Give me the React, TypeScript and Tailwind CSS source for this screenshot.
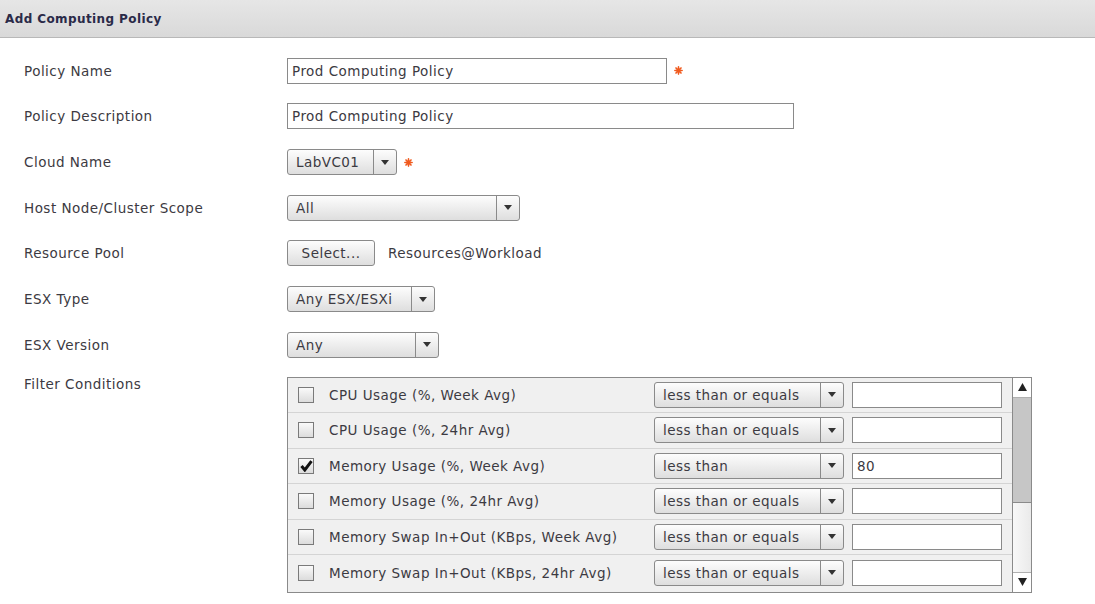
import React from "react";

const font = { fontFamily: '"DejaVu Sans", Verdana, sans-serif' };

function Caret() {
  return (
    <svg width="8" height="5" viewBox="0 0 8 5">
      <path d="M0 0h8L4 5z" fill="#333" />
    </svg>
  );
}

function Select({ value, width, arrowW = 23 }: { value: string; width: string; arrowW?: number }) {
  return (
    <div
      className={`flex h-[26px] ${width} items-stretch rounded-[3px] border border-[#8a8a8a] bg-gradient-to-b from-[#fdfdfd] to-[#dedede] text-[13.5px] tracking-[0.45px] text-[#3c3a42]`}
    >
      <div className="flex flex-1 items-center pl-2 whitespace-nowrap">{value}</div>
      <div className="flex items-center justify-center border-l border-[#8a8a8a]" style={{ width: arrowW }}>
        <Caret />
      </div>
    </div>
  );
}

function Star() {
  return (
    <svg className="ml-[7px]" width="9" height="9" viewBox="0 0 10 10">
      <g stroke="#f05a1e" strokeWidth="1.8" strokeLinecap="round">
        <path d="M5 1v8M1 5h8M2.2 2.2l5.6 5.6M7.8 2.2l-5.6 5.6" />
      </g>
    </svg>
  );
}

function Checkbox({ checked }: { checked?: boolean }) {
  return (
    <div className="flex h-[16px] w-[16px] items-center justify-center border border-[#7a7a7a] bg-gradient-to-b from-[#fafafa] to-[#dcdcdc]">
      {checked && (
        <svg width="13" height="12" viewBox="0 0 13 12">
          <path d="M1.5 6 L4.8 10 L11.5 1.2" stroke="#111" strokeWidth="3" fill="none" />
        </svg>
      )}
    </div>
  );
}

const conditions = [
  { name: "CPU Usage (%, Week Avg)", op: "less than or equals", val: "" },
  { name: "CPU Usage (%, 24hr Avg)", op: "less than or equals", val: "" },
  { name: "Memory Usage (%, Week Avg)", op: "less than", val: "80", checked: true },
  { name: "Memory Usage (%, 24hr Avg)", op: "less than or equals", val: "" },
  { name: "Memory Swap In+Out (KBps, Week Avg)", op: "less than or equals", val: "" },
  { name: "Memory Swap In+Out (KBps, 24hr Avg)", op: "less than or equals", val: "" },
];

const text = "text-[13.5px] tracking-[0.48px] text-[#3c3a42]";

function Row({ label, children }: { label: string; children: React.ReactNode }) {
  return (
    <div className="flex h-[45.67px] items-center">
      <div className={`w-[263px] ${text}`}>{label}</div>
      <div className="flex items-center">{children}</div>
    </div>
  );
}

export default function App() {
  return (
    <div className="h-[604px] w-[1095px] overflow-hidden bg-white" style={font}>
      {/* Header */}
      <div className="flex h-[38px] items-center border-b border-[#b8b8b8] bg-gradient-to-b from-[#e6e6e6] to-[#d9d9d9] pl-[5px]">
        <span className="text-[12px] font-bold tracking-[0.4px] text-[#2a2a48]">Add Computing Policy</span>
      </div>

      {/* Form */}
      <div className="pt-[10px] pl-[24px]">
        <Row label="Policy Name">
          <div className={`flex h-[26px] w-[380px] items-center border border-[#8a8a8a] bg-white pl-[4px] ${text}`}>
            Prod Computing Policy
          </div>
          <Star />
        </Row>
        <Row label="Policy Description">
          <div className={`flex h-[26px] w-[507px] items-center border border-[#8a8a8a] bg-white pl-[4px] ${text}`}>
            Prod Computing Policy
          </div>
        </Row>
        <Row label="Cloud Name">
          <Select value="LabVC01" width="w-[110px]" />
          <Star />
        </Row>
        <Row label="Host Node/Cluster Scope">
          <Select value="All" width="w-[233px]" />
        </Row>
        <Row label="Resource Pool">
          <div
            className={`flex h-[26px] w-[88px] items-center justify-center rounded-[3px] border border-[#8a8a8a] bg-gradient-to-b from-[#fdfdfd] to-[#dedede] ${text}`}
          >
            Select...
          </div>
          <span className={`ml-[13px] ${text}`}>Resources@Workload</span>
        </Row>
        <Row label="ESX Type">
          <Select value="Any ESX/ESXi" width="w-[148px]" />
        </Row>
        <Row label="ESX Version">
          <Select value="Any" width="w-[152px]" />
        </Row>

        {/* Filter conditions */}
        <div className="mt-[9px] flex">
          <div className={`w-[263px] leading-[15px] ${text}`}>Filter Conditions</div>
          <div className="flex h-[216px] w-[745px] border border-[#8a8a8a] bg-[#f0f0f0]">
            <div className="flex-1">
              {conditions.map((c) => (
                <div
                  key={c.name}
                  className="flex h-[35.5px] items-center border-b border-[#d4d4d4] pl-[10px] last:border-b-0"
                >
                  <Checkbox checked={c.checked} />
                  <span className={`ml-[15px] w-[325px] whitespace-nowrap ${text}`}>{c.name}</span>
                  <Select value={c.op} width="w-[190px]" />
                  <div className={`ml-[8px] flex h-[26px] w-[150px] items-center border border-[#8a8a8a] bg-white pl-[4px] ${text}`}>
                    {c.val}
                  </div>
                </div>
              ))}
            </div>
            {/* Scrollbar */}
            <div className="flex w-[19px] flex-col border-l border-[#8a8a8a] bg-[#f6f6f6]">
              <div className="flex h-[20px] items-center justify-center border-b border-[#b0b0b0] bg-white">
                <svg width="9" height="8" viewBox="0 0 9 8">
                  <path d="M0 8h9L4.5 0z" fill="#222" />
                </svg>
              </div>
              <div className="h-[105px] border-b border-[#8a8a8a] bg-[#c6c6c6]" />
              <div className="flex-1 bg-gradient-to-r from-[#f8f8f8] to-[#eaeaea]" />
              <div className="flex h-[20px] items-center justify-center border-t border-[#b0b0b0] bg-white">
                <svg width="9" height="8" viewBox="0 0 9 8">
                  <path d="M0 0h9L4.5 8z" fill="#222" />
                </svg>
              </div>
            </div>
          </div>
        </div>
      </div>
    </div>
  );
}
